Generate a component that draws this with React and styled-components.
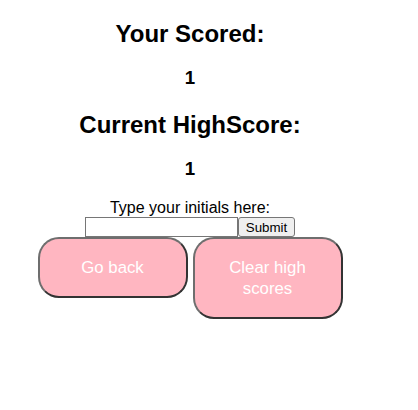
import React from 'react';
import styled, { createGlobalStyle } from 'styled-components';

const GlobalStyle = createGlobalStyle`
  body {
    margin: 0 8px;
    background: #ffffff;
    color: #000000;
    font-family: "Liberation Sans", Arial, Helvetica, sans-serif;
  }
`;

const Page = styled.main`
  display: flow-root;
  width: 364px;
  text-align: center;
`;

const Title = styled.h2`
  font-size: 24px;
  line-height: 27px;
  font-weight: bold;
  margin: ${(p) => p.$top ?? 20}px 0 20px;
`;

const Score = styled.h3`
  font-size: 18.72px;
  line-height: 21px;
  font-weight: bold;
  margin: 20px 0;
`;

const Form = styled.form`
  display: flex;
  flex-direction: column;
  align-items: center;
  margin-top: 20px;
`;

const Label = styled.label`
  font-size: 16px;
  line-height: 18px;
`;

const InputRow = styled.div`
  display: flex;
  justify-content: center;
`;

const TextInput = styled.input`
  box-sizing: border-box;
  width: 153px;
  height: 20px;
  margin: 0;
  padding: 1px 2px;
  border: 1px solid #767676;
  border-radius: 0;
  background: #fff;
  font: 13.33px "Liberation Sans", Arial, sans-serif;
`;

const SubmitButton = styled.button`
  box-sizing: border-box;
  width: 57px;
  height: 20px;
  margin: 0;
  padding: 0 6px;
  border: 1px solid #767676;
  border-radius: 3px;
  background: #efefef;
  color: #000;
  font: 13.33px "Liberation Sans", Arial, sans-serif;
`;

const ButtonRow = styled.div`
  display: flex;
  justify-content: center;
  align-items: flex-start;
  gap: 5px;
  margin-top: 0;
`;

const PinkButton = styled.button`
  box-sizing: border-box;
  width: 150px;
  padding: 18px 12px;
  border: 2px solid;
  border-color: #6e6e6e #333333 #333333 #6e6e6e;
  border-radius: 21px;
  background: #ffb6c1;
  color: #ffffff;
  font-family: "Liberation Sans", Arial, sans-serif;
  font-size: 16.8px;
  line-height: 21px;
`;

export default function App() {
  return (
    <>
      <GlobalStyle />
      <Page>
        <Title>Your Scored:</Title>
        <Score>1</Score>
        <Title $top={23}>Current HighScore:</Title>
        <Score>1</Score>
        <Form onSubmit={(e) => e.preventDefault()}>
          <Label htmlFor="initials">Type your initials here:</Label>
          <InputRow>
            <TextInput id="initials" type="text" />
            <SubmitButton type="submit">Submit</SubmitButton>
          </InputRow>
          <ButtonRow>
            <PinkButton type="button">Go back</PinkButton>
            <PinkButton type="button">Clear high scores</PinkButton>
          </ButtonRow>
        </Form>
      </Page>
    </>
  );
}
